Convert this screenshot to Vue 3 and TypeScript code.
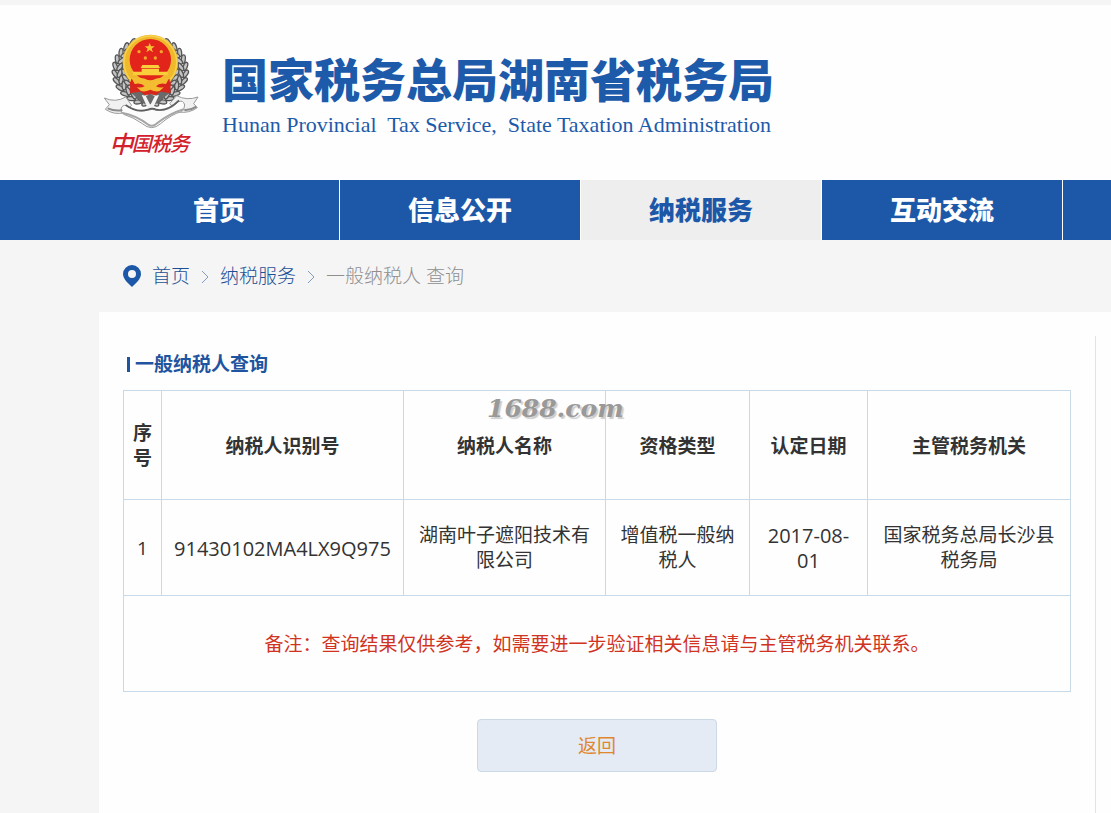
<script setup lang="ts">
interface NavItem {
  label: string
  active: boolean
}

interface Taxpayer {
  id: string
  name: string
  kind: string
  date: string
  office: string
}

interface Grain {
  x: number
  y: number
  turn: number
}

const navItems: NavItem[] = [
  { label: '首页', active: false },
  { label: '信息公开', active: false },
  { label: '纳税服务', active: true },
  { label: '互动交流', active: false },
]

const rows: Taxpayer[] = [
  {
    id: '91430102MA4LX9Q975',
    name: '湖南叶子遮阳技术有限公司',
    kind: '增值税一般纳税人',
    date: '2017-08-01',
    office: '国家税务总局长沙县税务局',
  },
]

// Ears of wheat on both sides of the emblem, three grains deep.
const grains: Grain[] = []
for (const [radius, tilt] of [[106, 28], [92, -28], [78, 20]]) {
  for (let deg = 30; deg <= 178; deg += 13) {
    const a = (deg * Math.PI) / 180
    for (const side of [-1, 1]) {
      grains.push({
        x: 166 + side * radius * Math.sin(a),
        y: 138 - radius * 0.93 * Math.cos(a),
        turn: side * (deg + tilt),
      })
    }
  }
}
</script>

<template>
  <div class="page">
    <header class="header">
      <svg class="emblem" viewBox="0 0 345 420" role="img" aria-label="中国税务">
        <g class="wheat">
          <ellipse
            v-for="(g, i) in grains"
            :key="i"
            rx="13"
            ry="6"
            :transform="`translate(${g.x} ${g.y}) rotate(${g.turn})`"
          />
        </g>
        <path d="M104 150 L228 150 L226 204 Q196 214 166 206 Q136 214 106 204Z" fill="#d9261c" />
        <circle cx="166" cy="112" r="83" fill="#f0b92c" />
        <circle cx="166" cy="112" r="79" fill="none" stroke="#f8d34f" stroke-width="4" />
        <circle cx="166" cy="104" r="62" fill="#e3241b" />
        <path d="M164 54l4 10 11 0-9 7 4 11-10-7-10 7 4-11-9-7 11 0z" fill="#f6c533" />
        <g fill="#f3a62b">
          <circle cx="132" cy="80" r="5" /><circle cx="199" cy="80" r="5" />
          <circle cx="151" cy="99" r="5" /><circle cx="181" cy="99" r="5" />
        </g>
        <path d="M142 120h48l5 9h-58zM140 131h52v9h26v11H114v-11h26z" fill="#f8ce3b" />
        <path d="M108 162q58 16 116 0l2 42q-30 10-60 4-30 6-60-4z" fill="#d9261c" />
        <path d="M110 160q30-6 56 8 26-14 56-8l-9 17q-20-5-30 7 12 6 24 2l-13 12q-12 4-28-4-16 8-28 4l-13-12q12 4 24-2-10-12-30-7z" fill="#f4bd31" />
        <path d="M108 204l28-4 18 14 12-8 12 8 18-14 28 4-42 34h-32z" fill="#6a6a6a" />
        <path d="M140 210l12 2 14 28 14-28 12-2-18 40h-16z" fill="#f5f5f5" />
        <g stroke="#9a9a9a" stroke-width="3" stroke-linejoin="round">
          <path d="M28 219q34 15 64-3l18 25-22 22q-30 8-57-10l12-14z" fill="#f1f1f1" />
          <path d="M309 216q-34 12-64-4l-21 24 27 25q30 5 56-13l-11-12z" fill="#f1f1f1" />
          <path d="M78 252q4-14 17-10 32 22 62 14 16-6 28 0 34 6 66-26 14-6 18 10 0 14-10 20-30 8-62 36-14 12-27 12-14 0-28-12-28-20-56-28-10-6-8-16z" fill="#fcfcfc" />
        </g>
        <path d="M80 263q44 8 80 36 10 7 22-1 40-32 84-45" fill="none" stroke="#a6a6a6" stroke-width="6" />
        <path d="M38 250q24 10 44 5M304 245q-18 12-36 10" fill="none" stroke="#8c8c8c" stroke-width="6" />
        <path d="M92 240q32 24 66 14 14-6 26 0 34 6 68-28" fill="none" stroke="#5f5f5f" stroke-width="5" />
        <text class="motto" x="43" y="384">中</text>
        <text class="motto small" x="110" y="379">国</text>
        <text class="motto small" x="167" y="377">税</text>
        <text class="motto small" x="224" y="377">务</text>
      </svg>
      <div class="brand">
        <h1 class="brand-name">国家税务总局湖南省税务局</h1>
        <p class="brand-sub">Hunan Provincial&nbsp; Tax Service,&nbsp; State Taxation Administration</p>
      </div>
    </header>

    <nav class="nav">
      <a v-for="item in navItems" :key="item.label" href="#" class="nav-item" :class="{ active: item.active }">{{ item.label }}</a>
    </nav>

    <div class="crumbs">
      <svg class="pin" viewBox="0 0 18 22" aria-hidden="true">
        <path fill-rule="evenodd" d="M9 0a9 9 0 0 1 9 9c0 5-5 9-9 13C5 18 0 14 0 9a9 9 0 0 1 9-9zm0 5a4 4 0 1 0 0 8 4 4 0 0 0 0-8z" />
      </svg>
      <a href="#">首页</a>
      <svg class="chevron" viewBox="0 0 8 14" aria-hidden="true"><path d="M1 1l6 6-6 6" /></svg>
      <a href="#">纳税服务</a>
      <svg class="chevron" viewBox="0 0 8 14" aria-hidden="true"><path d="M1 1l6 6-6 6" /></svg>
      <span class="current">一般纳税人 查询</span>
    </div>

    <div class="card">
      <main class="content">
        <h2 class="title">一般纳税人查询</h2>
        <div class="table-wrap">
          <table>
            <colgroup>
              <col class="c-no" /><col class="c-id" /><col class="c-name" />
              <col class="c-kind" /><col class="c-date" /><col />
            </colgroup>
            <thead>
              <tr>
                <th>序号</th>
                <th>纳税人识别号</th>
                <th>纳税人名称</th>
                <th>资格类型</th>
                <th>认定日期</th>
                <th>主管税务机关</th>
              </tr>
            </thead>
            <tbody>
              <tr v-for="(row, i) in rows" :key="row.id">
                <td>{{ i + 1 }}</td>
                <td class="digits">{{ row.id }}</td>
                <td>{{ row.name }}</td>
                <td>{{ row.kind }}</td>
                <td class="digits">{{ row.date }}</td>
                <td>{{ row.office }}</td>
              </tr>
              <tr>
                <td colspan="6" class="note">备注：查询结果仅供参考，如需要进一步验证相关信息请与主管税务机关联系。</td>
              </tr>
            </tbody>
          </table>
          <span class="watermark">1688.com</span>
        </div>
        <button type="button" class="back">返回</button>
      </main>
    </div>
  </div>
</template>

<style>
body {
  margin: 0;
  background: #f5f5f5;
}
</style>

<style scoped>
.page {
  display: flex;
  flex-direction: column;
  min-height: 100vh;
  box-sizing: border-box;
  padding-top: 5px;
  overflow: hidden;
  background: #f5f5f5;
  color: #333;
  font-family: "Open Sans", "Noto Sans CJK SC", sans-serif;
  font-size: 19px;
  line-height: 25px;
}

a {
  color: inherit;
  text-decoration: none;
}

.header {
  display: flex;
  align-items: flex-start;
  gap: 12px;
  padding: 20px 0 15px 95px;
  background: #fefefe;
}

.emblem {
  flex: none;
  width: 115px;
  height: 140px;
}

.wheat ellipse {
  fill: #c4c4c4;
  stroke: #555;
  stroke-width: 4;
}

.motto {
  fill: #d3202a;
  font-family: "Noto Sans CJK SC", sans-serif;
  font-size: 72px;
  font-style: italic;
  font-weight: 500;
}

.motto.small {
  font-size: 60px;
}

.brand {
  color: #1e5aaa;
  white-space: nowrap;
}

.brand-name {
  margin: 24px 0 0;
  font-family: "Noto Sans CJK SC", sans-serif;
  font-size: 46px;
  font-weight: 900;
  line-height: 56px;
}

.brand-sub {
  margin: 8px 0 0;
  font-family: "Liberation Serif", serif;
  font-size: 22px;
  line-height: 24px;
}

.nav {
  display: flex;
  padding-left: 99px;
  background: #1d58a8;
}

.nav-item {
  box-sizing: border-box;
  flex: none;
  width: 241px;
  padding-bottom: 2px;
  border-right: 1px solid #fff;
  color: #fff;
  font-family: "Noto Sans CJK SC", sans-serif;
  font-size: 26px;
  font-weight: 900;
  line-height: 58px;
  text-align: center;
}

.nav-item.active {
  background: #eee;
  color: #1d58a8;
}

.crumbs {
  display: flex;
  align-items: center;
  gap: 11px;
  padding: 24px 0 23px 123px;
  color: #1d4f94;
  font-weight: 300;
}

.pin {
  width: 18px;
  height: 22px;
  margin-bottom: 2px;
  fill: #1d58a8;
}

.chevron {
  width: 8px;
  height: 14px;
  fill: none;
  stroke: #7f9cc4;
}

.current {
  color: #8f8f8f;
}

.card {
  flex: 1;
  display: flex;
  margin-left: 99px;
  padding: 24px 15px 0 24px;
  background: #fefefe;
}

.content {
  flex: 1;
  padding-right: 24px;
  border-right: 1px solid #dfe3ea;
}

.title {
  display: flex;
  align-items: center;
  gap: 5px;
  margin: 16px 0 13px 4px;
  color: #1f54a0;
  font-size: 19px;
  font-weight: 700;
}

.title::before {
  width: 3px;
  height: 15px;
  background: #1f54a0;
  content: "";
}

.table-wrap {
  position: relative;
}

table {
  width: 100%;
  border-collapse: collapse;
  table-layout: fixed;
}

.c-no {
  width: 38px;
}

.c-id {
  width: 242px;
}

.c-name {
  width: 202px;
}

.c-kind {
  width: 144px;
}

.c-date {
  width: 118px;
}

th,
td {
  padding: 23px 12px 22px;
  border: 1px solid #c8d9e8;
  text-align: center;
}

th {
  padding: 30px 12px 28px;
  font-weight: 700;
}

th:first-child,
td:first-child {
  padding-right: 9px;
  padding-left: 9px;
}

.digits {
  padding-right: 10px;
  padding-left: 10px;
  font-size: 20px;
}

.note {
  padding-top: 36px;
  padding-bottom: 34px;
  color: #d0331f;
}

.watermark {
  position: absolute;
  top: 5px;
  left: 364px;
  color: #999;
  font-family: "DejaVu Serif", serif;
  font-size: 25px;
  font-style: italic;
  font-weight: 700;
  line-height: 28px;
  text-shadow: 2px 2px 1px #ccc;
}

.back {
  display: block;
  box-sizing: border-box;
  width: 240px;
  margin: 27px auto 0;
  padding: 14px 0 12px;
  border: 1px solid #cbd8e6;
  border-radius: 4px;
  background: #e4ebf4;
  color: #e0872c;
  font: inherit;
}
</style>
